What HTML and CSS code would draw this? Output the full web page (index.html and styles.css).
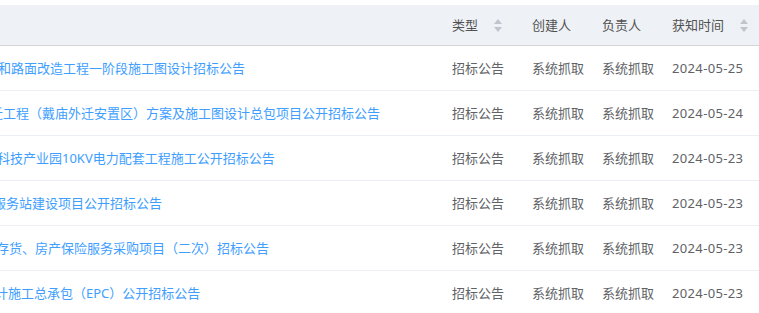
FILE: index.html
```html
<!DOCTYPE html>
<html lang="zh">
<head>
<meta charset="utf-8">
<link rel="stylesheet" href="styles.css">
</head>
<body>
<div class="wrap">
  <table class="grid">
    <colgroup>
      <col class="c-title"><col class="c-type"><col class="c-user"><col class="c-owner"><col class="c-date">
    </colgroup>
    <thead>
      <tr>
        <th class="title"></th>
        <th><span class="hd">类型<span class="sort"><i class="up"></i><i class="down"></i></span></span></th>
        <th>创建人</th>
        <th>负责人</th>
        <th><span class="hd">获知时间<span class="sort"><i class="up"></i><i class="down"></i></span></span></th>
      </tr>
    </thead>
    <tbody>
      <tr>
        <td class="title"><span class="link cut1">和路面改造工程一阶段施工图设计招标公告</span></td>
        <td>招标公告</td><td>系统抓取</td><td>系统抓取</td><td class="date">2024-05-25</td>
      </tr>
      <tr>
        <td class="title"><span class="link cut2">迁工程（戴庙外迁安置区）方案及施工图设计总包项目公开招标公告</span></td>
        <td>招标公告</td><td>系统抓取</td><td>系统抓取</td><td class="date">2024-05-24</td>
      </tr>
      <tr>
        <td class="title"><span class="link cut3">科技产业园10KV电力配套工程施工公开招标公告</span></td>
        <td>招标公告</td><td>系统抓取</td><td>系统抓取</td><td class="date">2024-05-23</td>
      </tr>
      <tr>
        <td class="title"><span class="link cut4">服务站建设项目公开招标公告</span></td>
        <td>招标公告</td><td>系统抓取</td><td>系统抓取</td><td class="date">2024-05-23</td>
      </tr>
      <tr>
        <td class="title"><span class="link cut5">存货、房产保险服务采购项目（二次）招标公告</span></td>
        <td>招标公告</td><td>系统抓取</td><td>系统抓取</td><td class="date">2024-05-23</td>
      </tr>
      <tr>
        <td class="title"><span class="link cut6">计施工总承包（EPC）公开招标公告</span></td>
        <td>招标公告</td><td>系统抓取</td><td>系统抓取</td><td class="date">2024-05-23</td>
      </tr>
    </tbody>
  </table>
</div>
</body>
</html>
```

FILE: styles.css
```css
html, body {
  margin: 0;
  padding: 0;
  background: #fff;
}
body {
  font-family: "Noto Sans", "Noto Sans CJK SC", sans-serif;
  font-size: 13px;
  color: #606266;
}
.wrap {
  padding-top: 5px;
  width: 759px;
  overflow: hidden;
}
.grid {
  border-collapse: collapse;
  table-layout: fixed;
  width: 769px;
}
.c-title { width: 442px; }
.c-type { width: 80px; }
.c-user { width: 70px; }
.c-owner { width: 70px; }
.c-date { width: 107px; }

th, td {
  padding: 0 10px;
  text-align: left;
  white-space: nowrap;
  overflow: hidden;
  font-weight: normal;
  line-height: 18px;
}
th {
  height: 40px;
  background: #eef1f6;
  color: #515151;
  border-bottom: 1px solid #d3d5d9;
}
td {
  height: 44px;
  padding-bottom: 1px;
  box-sizing: border-box;
  border-bottom: 1px solid #ebeef5;
}
tbody tr { height: 45px; }
tbody tr:last-child td { border-bottom: none; }
th.title, td.title { padding-left: 0; padding-right: 0; }
td.date { letter-spacing: 0.35px; }

.link { color: #409eff; display: inline-block; }
.cut1 { margin-left: -2px; }
.cut2 { margin-left: -10px; }
.cut3 { margin-left: -3px; }
.cut4 { margin-left: -7px; }
.cut5 { margin-left: -4px; }
.cut6 { margin-left: -5px; }

.hd { display: inline-flex; align-items: center; }
.sort {
  display: inline-flex;
  flex-direction: column;
  gap: 3px;
  margin-left: 16px;
}
.sort i {
  display: block;
  width: 0;
  height: 0;
  border-left: 4px solid transparent;
  border-right: 4px solid transparent;
}
.sort .up { border-bottom: 5px solid #c0c4cc; }
.sort .down { border-top: 5px solid #c0c4cc; }
```
